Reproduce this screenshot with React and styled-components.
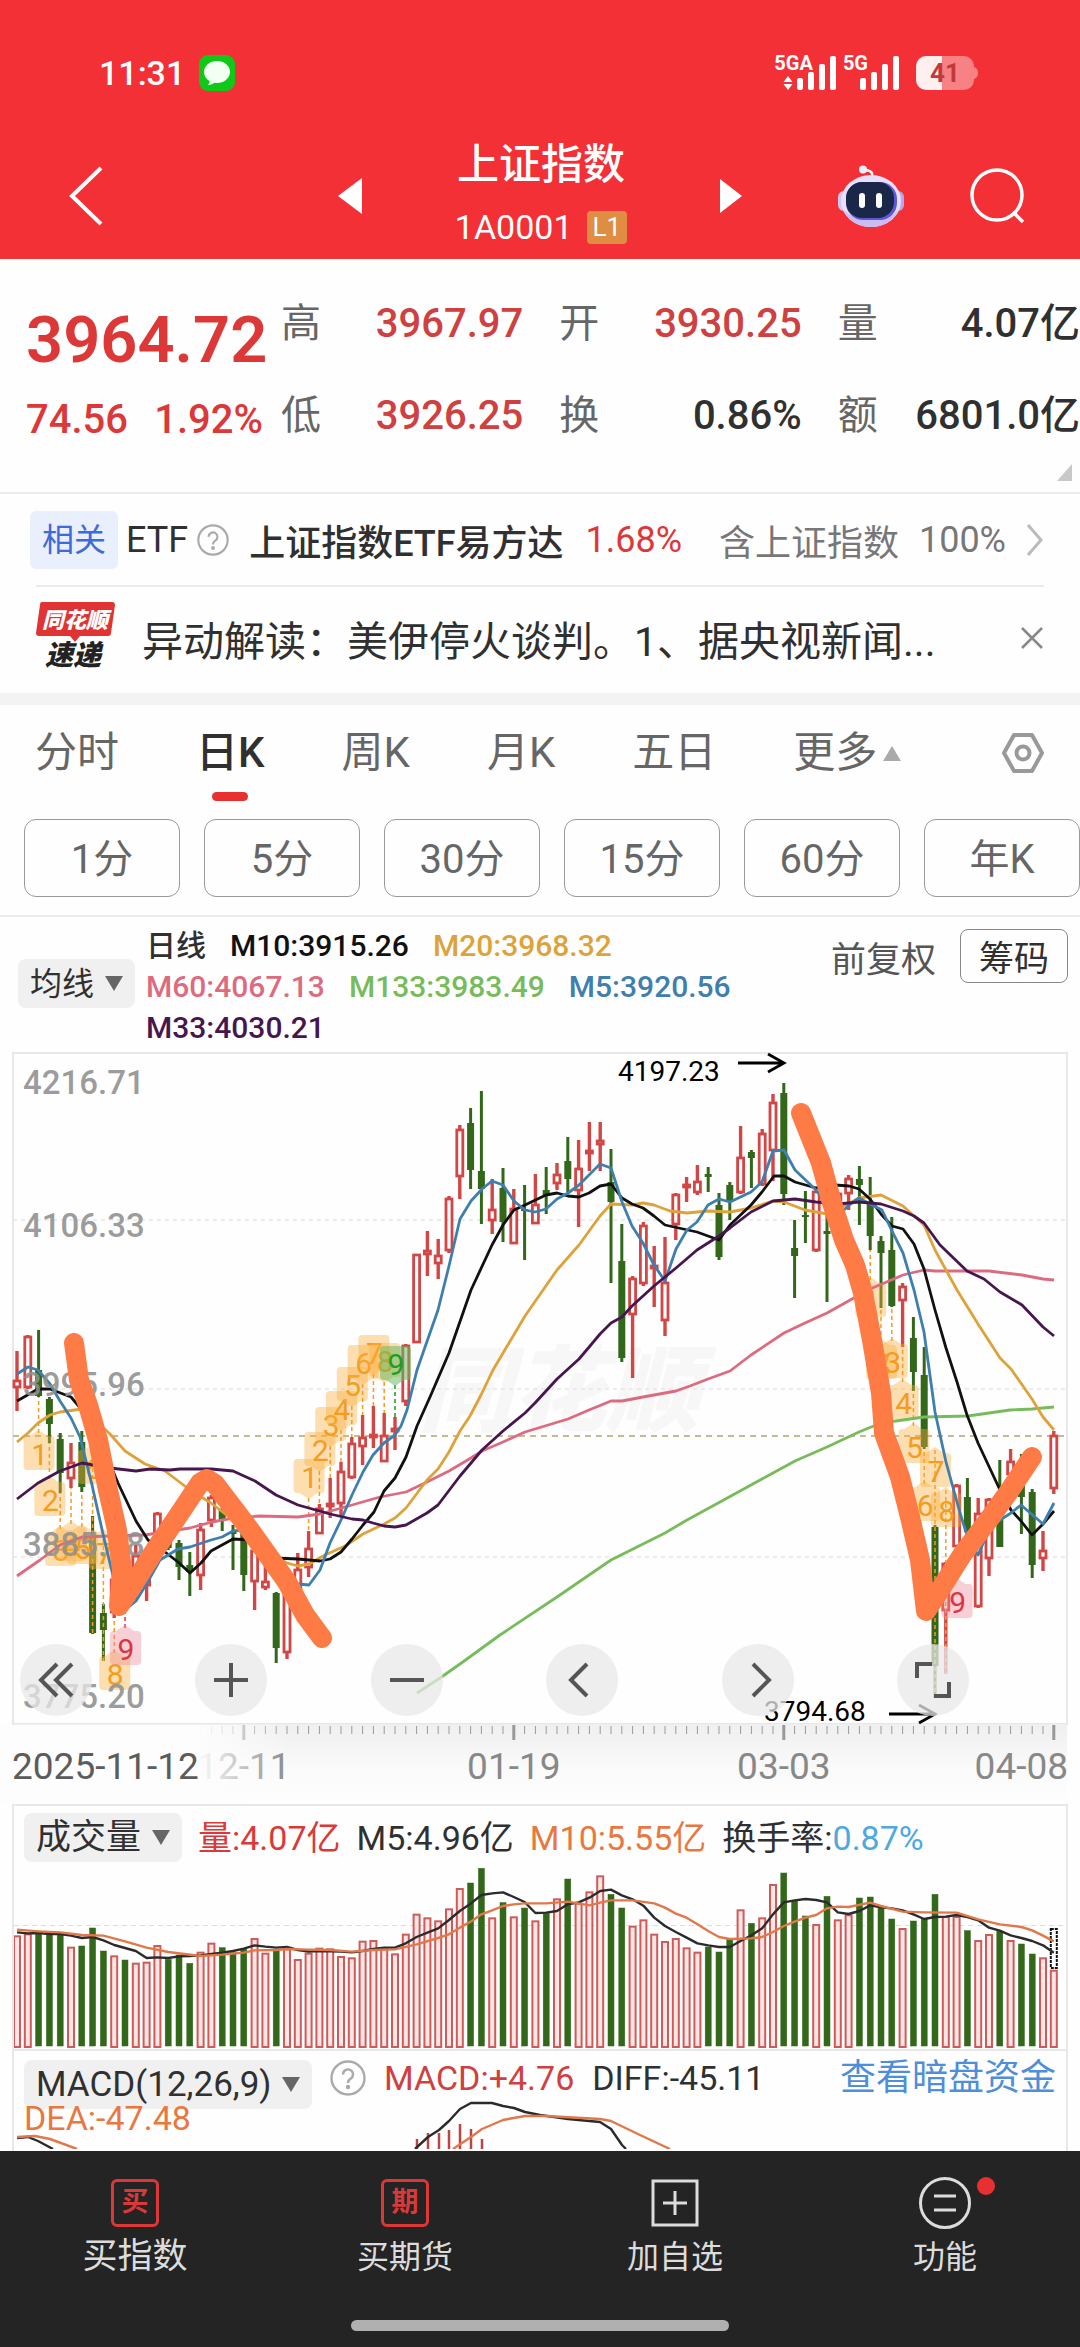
import React from "react";
import styled, { createGlobalStyle } from "styled-components";

const GlobalStyle = createGlobalStyle`
  * {
    box-sizing: border-box;
  }
  body {
    margin: 0;
    background: #fefefe;
    color: #303030;
    font-family: Roboto, "Noto Sans CJK SC", sans-serif;
  }
  button, select {
    font-family: inherit;
    color: inherit;
    background: none;
    border: 0;
    padding: 0;
    margin: 0;
  }
  svg {
    display: block;
    flex: none;
  }
`;

const RED = "#dc3838";
const GREEN = "#33681b";
const CANDLE_RED = "#d24646";

const Page = styled.div`
  min-height: 100vh;
  display: flex;
  flex-direction: column;
`;

/* ---------- header ---------- */

const Header = styled.header`
  background: #f23036;
  color: #fff;
`;

const StatusBar = styled.div`
  height: 134px;
  padding: 12px 102px 0 99px;
  display: flex;
  align-items: center;
  gap: 16px;
`;

const Clock = styled.span`
  flex: 1;
  display: flex;
  align-items: center;
  gap: 14px;
  font-size: 34px;
  font-weight: 500;
`;

const TitleBar = styled.div`
  height: 125px;
  padding: 0 54px 4px;
  display: grid;
  grid-template-columns: 1fr 404px 1fr;
  align-items: center;
`;

const BackButton = styled.button`
  padding-left: 14px;
`;

const TitleGroup = styled.div`
  display: flex;
  align-items: center;
  justify-content: space-between;
`;

const Title = styled.h1`
  margin: 0;
  font-size: 42px;
  font-weight: 500;
  line-height: 62px;
  text-align: center;
`;

const Code = styled.div`
  display: flex;
  align-items: center;
  justify-content: center;
  gap: 14px;
  font-size: 34px;
  line-height: 62px;
`;

const Level = styled.span`
  padding: 0 6px;
  border-radius: 4px;
  background: #e08d44;
  font-size: 26px;
  line-height: 33px;
`;

const Actions = styled.div`
  display: flex;
  align-items: center;
  justify-content: flex-end;
  gap: 66px;
`;

/* ---------- quote ---------- */

const Quote = styled.section`
  border-bottom: 2px solid #ececec;
`;

const QuoteRow = styled.div`
  display: flex;
  padding-top: 19px;
`;

const Last = styled.div`
  width: 281px;
  padding: 20px 18px 0 26px;
  color: ${RED};
  font-weight: 500;
`;

const Price = styled.div`
  font-size: 65px;
  font-weight: 600;
  line-height: 84px;
`;

const Change = styled.div`
  display: flex;
  justify-content: space-between;
  font-size: 40px;
  line-height: 76px;
`;

const Stats = styled.div`
  flex: 1;
  display: grid;
  grid-template-columns: repeat(3, 1fr);
  column-gap: 36px;
`;

const Stat = styled.div`
  display: flex;
  justify-content: space-between;
  font-size: 40px;
  line-height: 92px;
  white-space: nowrap;
  color: #666;
`;

const Value = styled.span`
  font-weight: 500;
  color: ${(p) => (p.$up ? "#cf4040" : "#303030")};
`;

const Corner = styled.svg`
  margin: 2px 8px 11px auto;
`;

const Related = styled.a`
  height: 91px;
  margin: 0 36px 0 30px;
  display: flex;
  align-items: center;
  font-size: 36px;
  color: #303030;
  text-decoration: none;
  white-space: nowrap;
`;

const Tag = styled.span`
  padding: 0 12px;
  margin-right: 8px;
  border-radius: 6px;
  background: #e9effd;
  color: #3f6ad8;
  font-size: 32px;
  line-height: 58px;
`;

const Fund = styled.span`
  margin: 0 22px 0 20px;
  font-weight: 500;
`;

const Rate = styled.span`
  flex: 1;
  color: ${RED};
`;

const Muted = styled.span`
  margin-right: 20px;
  color: #777;
`;

const News = styled.div`
  height: 108px;
  margin: 0 36px;
  padding-bottom: 4px;
  border-top: 2px solid #ececec;
  display: flex;
  align-items: center;
  gap: 26px;
  font-size: 41px;
`;

const NewsText = styled.p`
  flex: 1;
  margin: 0;
  white-space: nowrap;
`;

const Band = styled.div`
  height: 12px;
  background: #f3f3f3;
`;

/* ---------- period tabs ---------- */

const Tabs = styled.nav`
  height: 106px;
  padding: 0 35px;
  display: flex;
  align-items: flex-start;
  gap: 77px;
`;

const Tab = styled.button`
  position: relative;
  display: flex;
  align-items: center;
  gap: 6px;
  font-size: 42px;
  line-height: 96px;
  font-weight: ${(p) => (p.$active ? 500 : 400)};
  color: ${(p) => (p.$active ? "#303030" : "#666")};

  &::after {
    content: "";
    display: ${(p) => (p.$active ? "block" : "none")};
    position: absolute;
    left: 50%;
    bottom: 0;
    width: 36px;
    height: 9px;
    margin-left: -18px;
    border-radius: 5px;
    background: #e93030;
  }
`;

const Gear = styled.button`
  margin-left: auto;
  align-self: flex-start;
  height: 96px;
`;

const Chips = styled.div`
  padding: 8px 0 18px 24px;
  display: grid;
  grid-template-columns: repeat(6, 1fr);
  gap: 24px;
  border-bottom: 2px solid #ececec;
`;

const Chip = styled.button`
  height: 78px;
  padding-bottom: 5px;
  border: 1px solid #999;
  border-radius: 12px;
  font-size: 40px;
  color: #666;
`;

/* ---------- moving averages ---------- */

const Averages = styled.div`
  height: 135px;
  padding: 8px 12px 0 18px;
  display: flex;
  align-items: flex-start;
`;

const SelectBox = styled.label`
  display: flex;
  align-items: center;
  gap: 10px;
  height: 49px;
  padding: 0 12px;
  border-radius: 8px;
  background: #f0f0f0;
  font-size: ${(p) => (p.$small ? 32 : 35)}px;

  select {
    appearance: none;
    font-size: inherit;
    line-height: 46px;
    outline: 0;
  }
`;

const AverageSelect = styled.div`
  padding: 34px 11px 0 0;
`;

const AverageList = styled.div`
  width: 610px;
  display: flex;
  flex-wrap: wrap;
  column-gap: 24px;
  font-size: 30px;
  font-weight: 500;
  line-height: 41px;
`;

const Average = styled.span`
  color: ${(p) => p.$color};
`;

const Adjust = styled.div`
  flex: 1;
  display: flex;
  align-items: center;
  justify-content: flex-end;
  gap: 24px;
  height: 62px;
  font-size: 35px;
  color: #555;
  white-space: nowrap;
`;

const Outlined = styled.button`
  height: 54px;
  padding: 0 18px 4px;
  border: 1px solid #888;
  border-radius: 8px;
  font-size: 35px;
  color: #303030;
`;

/* ---------- charts ---------- */

const ChartArea = styled.section`
  position: relative;

  > svg {
    width: 100%;
    height: auto;
  }
`;

const Tools = styled.div`
  position: absolute;
  left: 20px;
  right: 111px;
  bottom: 88px;
  display: flex;
  justify-content: space-between;
`;

const ToolButton = styled.button`
  width: 72px;
  height: 72px;
  border-radius: 50%;
  background: rgba(232, 232, 232, 0.75);
  display: flex;
  align-items: center;
  justify-content: center;
`;

const Panel = styled.section`
  margin: 0 12px;
  border: solid #e8e8e8;
  border-width: 2px 2px 0;

  > svg {
    width: 100%;
    height: auto;
  }
`;

const VolumeHead = styled.div`
  display: flex;
  align-items: center;
  gap: 16px;
  height: 61px;
  padding: 2px 10px 0;
  font-size: 34px;
  line-height: 46px;
  white-space: nowrap;
`;

const Colored = styled.span`
  color: ${(p) => p.$color};
`;

const MacdPanel = styled(Panel)`
  flex: 1;
  display: grid;
  grid-template-rows: 98px;

  > * {
    grid-area: 1 / 1;
  }
`;

const MacdHead = styled.div`
  display: grid;
  align-content: start;
  padding: 9px 10px 0;
  font-size: 34px;
  line-height: 34px;
  white-space: nowrap;
`;

const MacdRow = styled.div`
  display: flex;
  gap: 18px;
  height: 40px;
`;

const MacdValue = styled.span`
  line-height: 36px;
  color: ${(p) => p.$color};
`;

const MoneyLink = styled.a`
  margin-left: auto;
  font-size: 36px;
  line-height: 36px;
  color: #4f8ed8;
  text-decoration: none;
`;

/* ---------- bottom bar ---------- */

const Bottom = styled.footer`
  background: #242424;
  color: #dcdcdc;
`;

const BottomNav = styled.nav`
  height: 169px;
  padding-top: 26px;
  display: grid;
  grid-template-columns: repeat(4, 1fr);
  align-items: start;
`;

const BottomItem = styled.button`
  display: flex;
  flex-direction: column;
  align-items: center;
  gap: 3px;
  font-size: ${(p) => (p.$large ? 35 : 32)}px;
  line-height: 50px;
`;

const Seal = styled.span`
  width: 48px;
  height: 48px;
  margin: 2px 0;
  border: 3px solid ${RED};
  border-radius: 6px;
  color: ${RED};
  font-size: 27px;
  font-weight: 700;
  line-height: 40px;
  text-align: center;
`;

const Handle = styled.div`
  width: 35%;
  height: 11px;
  margin: 0 auto 16px;
  border-radius: 6px;
  background: #b0b0b0;
`;

/* ---------- data ---------- */

const STEP = 10.8;
const cx = (i) => 17 + i * STEP;

// type, high, low, body top, body bottom
const CANDLES = [
  ["r", 1351, 1411, 1381, 1387], ["r", 1335, 1389, 1337, 1387], ["g", 1330, 1397, 1370, 1396],
  ["g", 1397, 1443, 1399, 1424], ["g", 1433, 1493, 1439, 1473], ["r", 1443, 1488, 1463, 1478],
  ["g", 1431, 1492, 1442, 1487], ["g", 1516, 1634, 1537, 1633], ["g", 1604, 1661, 1613, 1630],
  ["r", 1578, 1618, 1580, 1612], ["r", 1560, 1612, 1570, 1600], ["r", 1545, 1600, 1556, 1590],
  ["r", 1550, 1601, 1552, 1585], ["r", 1512, 1560, 1514, 1558], ["g", 1521, 1550, 1522, 1548],
  ["g", 1540, 1580, 1543, 1567], ["g", 1552, 1596, 1565, 1572], ["r", 1523, 1590, 1530, 1575],
  ["r", 1495, 1527, 1498, 1520], ["g", 1508, 1531, 1509, 1519], ["g", 1525, 1570, 1532, 1534],
  ["g", 1530, 1591, 1532, 1575], ["r", 1548, 1610, 1551, 1581], ["r", 1560, 1590, 1582, 1587],
  ["g", 1592, 1663, 1593, 1648], ["r", 1590, 1659, 1592, 1652], ["r", 1553, 1592, 1570, 1590],
  ["r", 1531, 1577, 1549, 1567], ["r", 1504, 1534, 1509, 1533], ["r", 1478, 1518, 1504, 1506],
  ["r", 1462, 1516, 1472, 1503], ["r", 1437, 1479, 1444, 1477], ["r", 1415, 1465, 1438, 1446],
  ["r", 1406, 1448, 1435, 1437], ["r", 1413, 1462, 1436, 1461], ["r", 1417, 1450, 1429, 1431],
  ["r", 1344, 1406, 1346, 1401], ["r", 1254, 1343, 1255, 1342], ["r", 1231, 1276, 1251, 1254],
  ["r", 1239, 1279, 1256, 1263], ["r", 1196, 1253, 1199, 1250], ["r", 1125, 1199, 1130, 1176],
  ["g", 1108, 1189, 1123, 1170], ["g", 1091, 1224, 1171, 1189], ["r", 1179, 1234, 1210, 1220],
  ["g", 1168, 1242, 1188, 1222], ["r", 1189, 1244, 1209, 1243], ["g", 1185, 1260, 1209, 1211],
  ["r", 1174, 1224, 1205, 1223], ["g", 1167, 1214, 1190, 1195], ["r", 1163, 1190, 1175, 1183],
  ["g", 1137, 1192, 1161, 1179], ["r", 1140, 1227, 1169, 1190], ["r", 1122, 1171, 1151, 1153],
  ["r", 1122, 1171, 1141, 1144], ["g", 1149, 1283, 1182, 1202], ["g", 1224, 1362, 1261, 1358],
  ["r", 1276, 1378, 1279, 1314], ["r", 1222, 1286, 1226, 1283], ["r", 1246, 1307, 1266, 1268],
  ["r", 1237, 1336, 1283, 1320], ["r", 1193, 1240, 1195, 1224], ["r", 1177, 1202, 1185, 1187],
  ["r", 1165, 1195, 1182, 1192], ["g", 1167, 1192, 1174, 1177], ["g", 1193, 1260, 1205, 1257],
  ["g", 1182, 1220, 1185, 1202], ["r", 1126, 1194, 1158, 1192], ["g", 1150, 1188, 1152, 1158],
  ["r", 1129, 1186, 1134, 1184], ["r", 1094, 1181, 1103, 1150], ["g", 1083, 1205, 1093, 1194],
  ["g", 1220, 1298, 1248, 1256], ["g", 1191, 1243, 1215, 1217], ["r", 1190, 1252, 1192, 1250],
  ["g", 1213, 1302, 1231, 1234], ["r", 1192, 1235, 1194, 1225], ["r", 1175, 1210, 1179, 1193],
  ["g", 1166, 1225, 1179, 1185], ["g", 1177, 1250, 1202, 1236], ["g", 1236, 1308, 1241, 1253],
  ["g", 1217, 1307, 1250, 1306], ["r", 1283, 1347, 1287, 1300], ["g", 1317, 1391, 1338, 1372],
  ["g", 1347, 1449, 1375, 1447], ["g", 1525, 1698, 1527, 1666], ["r", 1562, 1674, 1564, 1610],
  ["r", 1484, 1547, 1486, 1546], ["g", 1478, 1563, 1497, 1532], ["r", 1498, 1608, 1514, 1606],
  ["r", 1498, 1576, 1500, 1558], ["g", 1460, 1547, 1512, 1547], ["r", 1449, 1478, 1462, 1474],
  ["g", 1454, 1534, 1475, 1497], ["g", 1489, 1578, 1492, 1565], ["r", 1531, 1571, 1551, 1558],
  ["r", 1431, 1494, 1436, 1488],
];

const LINES = [
  ["#dd6b80", "17,1576 40,1560 60,1545 82,1537 110,1536 145,1535 170,1531 190,1528 212,1522 233,1518 260,1516 298,1517 320,1514 352,1505 380,1497 406,1492 427,1482 449,1471 471,1458 482,1451 503,1442 525,1432 568,1419 589,1410 611,1401 622,1401 643,1397 676,1391 690,1386 708,1379 730,1371 751,1355 784,1333 805,1323 827,1313 870,1289 903,1275 924,1270 935,1271 989,1271 1022,1275 1043,1279 1054,1280"],
  ["#77bb5b", "417,1693 440,1678 460,1664 500,1635 557,1597 611,1560 643,1544 665,1533 687,1520 720,1502 773,1473 795,1461 827,1447 859,1432 881,1423 903,1420 924,1417 968,1416 1010,1410 1032,1409 1054,1407"],
  ["#dda33a", "17,1442 28,1433 38,1423 50,1415 60,1412 82,1409 95,1420 110,1434 125,1451 145,1464 165,1471 190,1490 211,1503 233,1520 255,1540 276,1557 287,1563 298,1566 309,1564 325,1555 345,1546 363,1534 384,1524 395,1518 406,1508 427,1480 438,1469 449,1452 460,1431 470,1416 481,1395 493,1370 525,1316 557,1270 579,1245 600,1216 611,1204 632,1205 643,1203 654,1205 670,1211 687,1213 708,1211 730,1212 751,1208 773,1201 784,1202 805,1210 827,1214 848,1204 859,1198 881,1195 903,1206 924,1225 935,1250 957,1290 978,1324 1000,1358 1011,1369 1032,1399 1043,1417 1054,1430"],
  ["#111", "17,1401 38,1389 50,1389 71,1397 82,1410 100,1440 118,1483 136,1521 148,1540 165,1552 178,1562 190,1573 201,1563 211,1551 233,1539 250,1540 275,1558 298,1559 320,1561 330,1559 341,1552 352,1539 363,1525 374,1512 384,1491 395,1478 406,1457 417,1426 430,1397 449,1353 471,1290 492,1245 503,1225 514,1210 525,1205 546,1195 557,1193 568,1196 579,1197 589,1193 600,1186 611,1184 622,1198 632,1204 643,1208 654,1216 665,1225 697,1232 719,1240 730,1225 751,1205 762,1192 774,1176 784,1176 795,1182 816,1188 835,1185 849,1186 859,1189 870,1199 881,1214 892,1226 903,1229 914,1244 924,1269 935,1310 946,1348 957,1382 967,1415 978,1443 1000,1490 1011,1510 1021,1521 1032,1535 1043,1524 1054,1511"],
  ["#3f7fae", "17,1374 28,1367 38,1370 50,1384 60,1401 71,1418 80,1437 92,1485 103,1534 114,1580 125,1610 136,1601 147,1583 160,1560 178,1549 190,1547 211,1540 222,1537 233,1531 244,1530 255,1540 276,1565 298,1584 309,1585 320,1570 330,1543 341,1520 352,1495 363,1472 373,1455 384,1443 395,1435 401,1426 407,1410 417,1370 438,1310 449,1266 460,1219 471,1201 482,1189 492,1181 503,1185 514,1201 525,1210 535,1212 546,1209 557,1199 568,1193 579,1185 589,1175 600,1164 611,1168 622,1202 632,1226 643,1243 654,1265 665,1281 676,1249 687,1230 697,1222 708,1205 719,1199 730,1202 751,1192 762,1182 773,1151 784,1150 795,1170 816,1190 827,1205 838,1216 849,1205 859,1198 870,1204 882,1210 892,1231 903,1253 914,1290 924,1332 935,1412 946,1462 960,1513 967,1535 978,1555 989,1530 1000,1520 1011,1513 1021,1505 1043,1524 1054,1503"],
  ["#47164f", "17,1499 38,1483 60,1471 82,1463 110,1468 136,1471 150,1469 170,1470 180,1469 211,1469 233,1471 255,1481 276,1495 298,1505 330,1514 352,1519 363,1520 373,1523 384,1526 395,1527 406,1525 427,1513 438,1505 460,1476 482,1450 503,1431 525,1413 535,1403 557,1379 579,1359 590,1346 600,1334 611,1323 622,1317 632,1306 654,1286 676,1268 697,1250 719,1236 730,1228 751,1212 773,1201 795,1199 816,1202 838,1204 859,1202 881,1204 903,1211 914,1216 924,1223 940,1245 967,1271 984,1279 1000,1292 1022,1305 1043,1327 1054,1336"],
];

// candle index, center y, digit
const MARKS = [
  [2, 1453, 1], [3, 1499, 2], [4, 1549, 3], [5, 1544, 4], [6, 1547, 5], [7, 1467, 6], [8, 1552, 7], [9, 1673, 8],
  [10, 1648, 9, "hot"],
  [27, 1476, 1, "up"], [28, 1449, 2, "up"], [29, 1424, 3, "up"], [30, 1408, 4, "up"], [31, 1384, 5, "up"],
  [32, 1362, 6, "up"], [33, 1352, 7, "up"], [34, 1360, 8, "up"], [35, 1363, 9, "cool"],
  [79, 1300, 1], [80, 1362, 2], [81, 1361, 3], [82, 1402, 4], [83, 1446, 5], [84, 1504, 6], [85, 1470, 7],
  [86, 1510, 8], [87, 1601, 9, "hot"],
];

const MARK_COLORS = {
  hot: ["#f08a98", "#dd3344"],
  cool: ["#6dbb62", "#1d9d22"],
};

const AXIS = [["4216.71", 1094], ["4106.33", 1237], ["3995.96", 1396], ["3885.58", 1556], ["3775.20", 1708]];

const VOLUME_TYPES =
  "rrgggrggg" + "rgrrrgggrrgggrrgrrrrrrrrrrrrrrrrrggrgrgrgrgrrrggrrrrrrrgggrgrrgggrgrrggggrgggrrgrrgrggrr";

const VOLUME_TOPS = [
  403, 397, 390, 395, 397, 437, 435, 381, 450, 463, 477, 485, 482, 432, 475, 462, 487, 452, 425, 440, 455, 445, 411,
  455, 450, 442, 474, 455, 440, 442, 465, 469, 419, 417, 440, 457, 398, 338, 349, 358, 322, 261, 246, 202, 349, 305,
  346, 321, 358, 337, 292, 234, 305, 271, 223, 280, 321, 374, 355, 398, 420, 411, 439, 452, 438, 453, 415, 325, 367,
  349, 249, 216, 300, 345, 369, 286, 355, 340, 291, 288, 320, 354, 381, 360, 355, 280, 345, 345, 389, 417, 399, 391,
  417, 429, 459, 469, 506,
];

const VOLUME_M5 = [
  394, 397, 396, 399, 399, 404, 411, 408, 418, 432, 441, 450, 471, 469, 471, 466, 465, 463, 459, 455, 450, 443, 433,
  437, 440, 438, 447, 452, 450, 451, 452, 454, 450, 444, 440, 440, 427, 408, 395, 382, 357, 330, 308, 282, 277, 274,
  288, 303, 336, 335, 330, 310, 304, 290, 270, 266, 283, 295, 314, 350, 375, 393, 410, 427, 433, 438, 438, 420, 403,
  382, 340, 304, 298, 294, 297, 304, 334, 339, 330, 313, 319, 322, 328, 340, 354, 348, 347, 342, 348, 358, 380, 389,
  403, 411, 420, 433, 455,
];

const VOLUME_M10 = [
  [0, 386], [2, 391], [4, 394], [6, 402], [8, 404], [10, 421], [12, 440], [14, 453], [17, 465], [19, 461], [21, 455],
  [22, 448], [24, 447], [25, 444], [27, 446], [29, 447], [31, 452], [33, 447], [35, 445], [37, 430], [39, 411],
  [40, 400], [41, 380], [42, 362], [43, 340], [44, 328], [45, 315], [46, 310], [47, 307], [49, 307], [51, 302],
  [53, 313], [54, 305], [55, 298], [57, 298], [59, 307], [60, 320], [61, 338], [62, 350], [63, 370], [64, 390],
  [65, 408], [66, 414], [68, 412], [69, 408], [70, 393], [71, 375], [72, 362], [73, 350], [74, 342], [75, 322],
  [76, 317], [77, 318], [79, 305], [80, 315], [82, 332], [84, 334], [87, 335], [89, 355], [91, 370], [93, 378],
  [94, 388], [95, 404], [96, 421],
];

/* ---------- drawings ---------- */

function Arrow({ color = "#666", up }) {
  return (
    <svg width="18" height="15" viewBox="0 0 18 15">
      <path d={up ? "M9 0L18 15H0z" : "M0 0h18L9 15z"} fill={color} />
    </svg>
  );
}

function Help({ size }) {
  return (
    <svg width={size} height={size} viewBox="0 0 36 36" fill="none" stroke="#aaa" strokeWidth="2.4">
      <circle cx="18" cy="18" r="16.5" />
      <path d="M13 14.5a5 5 0 1 1 7.6 4.2c-1.8 1.1-2.6 2-2.6 4.3" />
      <circle cx="18" cy="27" r="1" fill="#aaa" />
    </svg>
  );
}

function Signal({ arrows }) {
  return (
    <svg width="54" height="34" viewBox="0 0 54 34" fill="#fff">
      {arrows && <path d="M5 20l4.5 6h-9zM5 34l4.5-6h-9z" />}
      <rect x="14" y="22" width="6" height="12" rx="2" />
      <rect x="25" y="16" width="6" height="18" rx="2" />
      <rect x="36" y="8" width="6" height="26" rx="2" />
      <rect x="47" y="0" width="6" height="34" rx="2" />
    </svg>
  );
}

const Network = styled.span`
  display: flex;
  align-items: flex-start;
  font-size: 20px;
  font-weight: 700;
  line-height: 14px;

  svg {
    margin-left: -30px;
  }
  & + & {
    margin-left: -10px;
  }
  & + & svg {
    margin-left: -22px;
  }
`;

function Battery() {
  return (
    <svg width="62" height="34" viewBox="0 0 62 34">
      <path d="M26 0h22a10 10 0 0 1 10 10v1q4 1 4 6t-4 6v1a10 10 0 0 1-10 10H26z" fill="#f88184" />
      <path d="M10 0h16v34H10A10 10 0 0 1 0 24V10A10 10 0 0 1 10 0z" fill="#fff0ef" />
      <text x="29" y="26" fontSize="26" fontWeight="700" fill="#c2383b" textAnchor="middle">41</text>
    </svg>
  );
}

function Robot() {
  return (
    <svg width="66" height="62" viewBox="0 0 66 62">
      <path d="M33 13c3-5 0-8-7-8" fill="none" stroke="#fff" strokeWidth="2.5" />
      <circle cx="25" cy="4.5" r="4" fill="#f3eefc" />
      <rect x="0" y="26" width="12" height="20" rx="6" fill="#cfc6f2" />
      <rect x="54" y="26" width="12" height="20" rx="6" fill="#b5a9ea" />
      <ellipse cx="33" cy="36" rx="30" ry="26" fill="#e7e0fb" />
      <path d="M5 44c6 12 15 18 28 18s22-6 28-18c-6 7-14 11-28 11S11 51 5 44z" fill="#c9bdf3" />
      <rect x="8" y="17" width="51" height="38" rx="17" fill="#6256d8" />
      <rect x="8" y="17" width="48" height="36" rx="16" fill="#1b2748" />
      <rect x="21" y="28" width="6" height="15" rx="3" fill="#fff" />
      <rect x="38" y="28" width="6" height="15" rx="3" fill="#fff" />
    </svg>
  );
}

function ExpressLogo() {
  return (
    <svg width="80" height="76" viewBox="0 -2 80 76">
      <path d="M6 0h70q3 0 3 3l-4 28q0 3-3 3H44l-5 6-5-6H3q-3 0-3-3L4 3q0-3 2-3z" fill="#e03434" />
      <text x="39" y="26" fontSize="22" fontWeight="900" fontStyle="italic" fill="#fff" textAnchor="middle">同花顺</text>
      <text x="37" y="63" fontSize="28" fontWeight="900" fontStyle="italic" fill="#222" textAnchor="middle">速递</text>
    </svg>
  );
}

function Mark({ index, y, digit, kind }) {
  const [fill, ink] = MARK_COLORS[kind] || ["#fbb040", "#f39c1f"];
  const x = cx(index);
  const rises = kind === "up" || kind === "cool";
  const end = rises ? CANDLES[index][1] : CANDLES[index][2];
  return (
    <g>
      <line x1={x} x2={x} y1={rises ? y + 22 : y - 20} y2={end} stroke={ink} strokeWidth="1.500" strokeDasharray="4 3" />
      <g fill={fill} opacity={kind === "cool" ? 0.55 : 0.4}>
        <rect x={x - 15} y={y - 17} width="31" height="34" rx="4" />
        <path d={rises ? `M${x - 9} ${y + 17}h18l-9 6z` : `M${x - 9} ${y - 17}h18l-9-6z`} />
      </g>
      <text x={x + 1} y={y + 12} fontSize="30" fill={ink} textAnchor="middle">{digit}</text>
    </g>
  );
}

function Candle({ index, data }) {
  const [type, high, low, top, bottom] = data;
  const x = cx(index);
  if (type === "g") {
    return (
      <g fill={GREEN}>
        <rect x={x - 1.5} y={high} width="3" height={low - high} />
        <rect x={x - 3.5} y={top} width="7" height={bottom - top} />
      </g>
    );
  }
  return (
    <g fill="none" stroke={CANDLE_RED}>
      <path d={`M${x} ${high}V${top}M${x} ${bottom}V${low}`} strokeWidth="3.4" />
      <rect x={x - 3} y={top} width="6" height={bottom - top} strokeWidth="2.8" />
    </g>
  );
}

function PriceChart() {
  return (
    <svg viewBox="0 1052 1080 752">
      <defs>
        <linearGradient id="scale" x1="0" y1="0" x2="0" y2="1">
          <stop offset="0" stopColor="#efefef" />
          <stop offset="0.5" stopColor="#f9f9f9" />
          <stop offset="1" stopColor="#fefefe" />
        </linearGradient>
        <linearGradient id="fade">
          <stop offset="0" stopColor="#fdfdfd" />
          <stop offset="0.68" stopColor="#fdfdfd" />
          <stop offset="1" stopColor="#fdfdfd" stopOpacity="0" />
        </linearGradient>
      </defs>
      <rect x="13" y="1053" width="1054" height="671" fill="none" stroke="#e8e8e8" strokeWidth="2" />
      <text x="418" y="1424" fontSize="94" fontWeight="900" fontStyle="italic" fill="#f7f7f7">同花顺</text>
      {[1220, 1389, 1557].map((y) => (
        <line key={y} x1="13" x2="1067" y1={y} y2={y} stroke="#e6e6e6" strokeWidth="1.500" strokeDasharray="4 4" />
      ))}
      <line x1="13" x2="1067" y1="1436" y2="1436" stroke="#b3a56c" strokeWidth="1.500" strokeDasharray="6 5" />
      {CANDLES.map((data, i) => <Candle key={i} index={i} data={data} />)}
      {MARKS.map(([index, y, digit, kind]) => (
        <Mark key={index} index={index} y={y} digit={digit} kind={kind} />
      ))}
      {LINES.map(([color, points]) => (
        <polyline key={color} points={points} fill="none" stroke={color} strokeWidth="2.800" strokeLinejoin="round" />
      ))}
      <g fontSize="33" fontWeight="500" fill="#8f8f8f" fillOpacity="0.9">
        {AXIS.map(([label, y]) => <text key={label} x="23" y={y}>{label}</text>)}
      </g>
      <g fontSize="28" fill="#000">
        <text x="618" y="1081">4197.23</text>
        <text x="764" y="1721">3794.68</text>
      </g>
      <path
        d="M738 1063h45M768 1054l16 9-16 9M889 1714h45M919 1705l16 9-16 9"
        fill="none"
        stroke="#000"
        strokeWidth="2.800"
      />
      <g fill="none" stroke="#fe7b46" strokeWidth="20" strokeLinecap="round" strokeLinejoin="round">
        <path d="M74 1343L79 1380L88 1405L98 1440L108 1490L117 1530L122 1570L119 1606L131 1588L155 1550L182 1510L200 1483L207 1479L215 1484L250 1530L287 1582L305 1615L322 1638" />
        <path d="M801 1113L821 1163L832 1203L844 1240L855 1265L863 1293L872 1340L881 1393L884 1433L900 1477L910 1517L920 1560L926 1611L940 1590L962 1555L987 1522L1010 1490L1032 1457" />
      </g>
      <rect x="13" y="1724" width="1054" height="79" fill="url(#scale)" />
      <g stroke="#999">
        {CANDLES.map((_, i) => (
          <line key={i} x1={cx(i)} x2={cx(i)} y1="1726" y2="1734" strokeWidth="1" />
        ))}
        {[21, 46, 71, 96].map((i) => (
          <line key={i} x1={cx(i)} x2={cx(i)} y1="1725" y2="1740" strokeWidth="3" />
        ))}
      </g>
      <g fontSize="37" fill="#888">
        <text x={cx(21)} y="1779" textAnchor="middle">12-11</text>
        <text x={cx(46)} y="1779" textAnchor="middle">01-19</text>
        <text x={cx(71)} y="1779" textAnchor="middle">03-03</text>
        <text x="1068" y="1779" textAnchor="end">04-08</text>
        <rect x="0" y="1725" width="290" height="78" fill="url(#fade)" />
        <text x="12" y="1779" fill="#5c5c5c">2025-11-12</text>
      </g>
    </svg>
  );
}

function VolumeChart() {
  const y = (v) => v / 3;
  return (
    <svg viewBox="14 66 1052 182">
      <line x1="14" x2="1066" y1="124.500" y2="124.500" stroke="#e0dada" strokeDasharray="5 4" />
      {VOLUME_TOPS.map((top, i) => {
        const up = VOLUME_TYPES[i] === "r";
        return (
          <rect
            key={i}
            x={cx(i) - 3}
            y={y(top) + (up ? 1 : 0)}
            width="6"
            height={245 - y(top)}
            fill={up ? "#fde6e4" : GREEN}
            stroke={up ? "#cf5a5a" : GREEN}
            strokeWidth={up ? 2 : 0.5}
          />
        );
      })}
      <rect x={cx(96) - 3} y="128" width="6" height="39" fill="#fff" stroke="#111" strokeWidth="2" strokeDasharray="3 1" />
      <g fill="none" strokeWidth="2.400" strokeLinejoin="round">
        <polyline points={VOLUME_M5.map((v, i) => `${cx(i)},${y(v)}`).join(" ")} stroke="#2b2b2b" />
        <polyline points={VOLUME_M10.map(([i, v]) => `${cx(i)},${y(v)}`).join(" ")} stroke="#e0784a" />
      </g>
    </svg>
  );
}

function MacdChart() {
  return (
    <svg viewBox="14 2053 1052 98">
      <path
        d="M417 2141v10M428 2135v16M439 2135v16M449 2132v19M460 2126v25M471 2131v20M482 2141v10"
        stroke="#b94545"
        strokeWidth="2.500"
      />
      <g fill="none" strokeWidth="2.400" strokeLinejoin="round">
        <path d="M17 2140L28 2139L38 2143L53 2151M415 2151L428 2139L439 2132L449 2123L460 2111L471 2105L492 2105L503 2108L514 2110L525 2114L540 2117L568 2121L600 2124L611 2131L622 2147L626 2151" stroke="#2b2b2b" />
        <path d="M17 2139L35 2138L50 2141L77 2151M453 2151L471 2139L482 2131L503 2122L525 2118L546 2118L600 2121L611 2123L640 2137L670 2151" stroke="#e0784a" />
      </g>
    </svg>
  );
}

const TOOL_ICONS = [
  ["收起", "M22 5L6 21l16 16M37 5L21 21l16 16"],
  ["放大", "M4 21h34M21 4v34"],
  ["缩小", "M4 21h34"],
  ["向左", "M26 5L10 21l16 16"],
  ["向右", "M16 5l16 16-16 16"],
  ["全屏", "M5 19V5h15M37 23v14H22"],
];

function Picker({ label, small }) {
  return (
    <SelectBox $small={small}>
      <select aria-label={label}>
        <option>{label}</option>
      </select>
      <Arrow />
    </SelectBox>
  );
}

/* ---------- page ---------- */

const STATS = [
  ["高", "3967.97", true], ["开", "3930.25", true], ["量", "4.07亿"],
  ["低", "3926.25", true], ["换", "0.86%"], ["额", "6801.0亿"],
];

const AVERAGES = [
  ["日线", "#303030"], ["M10:3915.26", "#111"], ["M20:3968.32", "#dda33a"],
  ["M60:4067.13", "#dd6b80"], ["M133:3983.49", "#77bb5b"], ["M5:3920.56", "#3f7fae"],
  ["M33:4030.21", "#47164f"],
];

export default function App() {
  return (
    <Page>
      <GlobalStyle />
      <Header>
        <StatusBar>
          <Clock>
            11:31
            <svg width="36" height="36" viewBox="0 0 36 36">
              <rect width="36" height="36" rx="9" fill="#10c818" />
              <ellipse cx="18" cy="17" rx="13" ry="11" fill="#f4fff4" />
              <path d="M11 24q0 4-2 6 5 0 8-4z" fill="#f4fff4" />
            </svg>
          </Clock>
          <Network>5GA<Signal arrows /></Network>
          <Network>5G<Signal /></Network>
          <Battery />
        </StatusBar>
        <TitleBar>
          <BackButton aria-label="返回">
            <svg width="36" height="60" viewBox="0 0 36 60" fill="none" stroke="#fff" strokeWidth="4">
              <path d="M33 2L4 30l29 28" />
            </svg>
          </BackButton>
          <TitleGroup>
            <button aria-label="上一个">
              <svg width="24" height="36" viewBox="0 0 24 36"><path d="M24 0v36L0 18z" fill="#fff" /></svg>
            </button>
            <div>
              <Title>上证指数</Title>
              <Code>1A0001<Level>L1</Level></Code>
            </div>
            <button aria-label="下一个">
              <svg width="22" height="34" viewBox="0 0 22 34"><path d="M0 0v34l22-17z" fill="#fff" /></svg>
            </button>
          </TitleGroup>
          <Actions>
            <button aria-label="助手"><Robot /></button>
            <button aria-label="搜索">
              <svg width="56" height="56" viewBox="0 0 56 56" fill="none" stroke="#fff" strokeWidth="3.500">
                <circle cx="27" cy="27" r="25" />
                <path d="M43 44l10 10" />
              </svg>
            </button>
          </Actions>
        </TitleBar>
      </Header>

      <Quote>
        <QuoteRow>
          <Last>
            <Price>3964.72</Price>
            <Change><span>74.56</span><span>1.92%</span></Change>
          </Last>
          <Stats>
            {STATS.map(([label, value, up]) => (
              <Stat key={label}>{label}<Value $up={up}>{value}</Value></Stat>
            ))}
          </Stats>
        </QuoteRow>
        <Corner width="15" height="17" viewBox="0 0 15 17"><path d="M15 0v17H0z" fill="#c8c8c8" /></Corner>
      </Quote>

      <Related href="#">
        <Tag>相关</Tag>
        ETF&nbsp;<Help size={32} />
        <Fund>上证指数ETF易方达</Fund>
        <Rate>1.68%</Rate>
        <Muted>含上证指数</Muted>
        <Muted>100%</Muted>
        <svg width="18" height="34" viewBox="0 0 18 34" fill="none" stroke="#bbb" strokeWidth="3"><path d="M2 2l13 15L2 32" /></svg>
      </Related>
      <News>
        <ExpressLogo />
        <NewsText>异动解读：美伊停火谈判。1、据央视新闻...</NewsText>
        <button aria-label="关闭">
          <svg width="24" height="24" viewBox="0 0 24 24" stroke="#888" strokeWidth="2.500"><path d="M2 2l20 20M22 2L2 22" /></svg>
        </button>
      </News>
      <Band />

      <Tabs>
        <Tab>分时</Tab>
        <Tab $active>日K</Tab>
        <Tab>周K</Tab>
        <Tab>月K</Tab>
        <Tab>五日</Tab>
        <Tab>更多<Arrow up color="#aaa" /></Tab>
        <Gear aria-label="设置">
          <svg width="44" height="42" viewBox="0 0 44 42" fill="none" stroke="#999" strokeWidth="4" strokeLinejoin="round">
            <path d="M13 3h18l10 18-10 18H13L3 21z" />
            <circle cx="22" cy="21" r="6.500" />
          </svg>
        </Gear>
      </Tabs>
      <Chips>
        {["1分", "5分", "30分", "15分", "60分", "年K"].map((name) => <Chip key={name}>{name}</Chip>)}
      </Chips>

      <Averages>
        <AverageSelect><Picker label="均线" small /></AverageSelect>
        <AverageList>
          {AVERAGES.map(([text, color]) => <Average key={text} $color={color}>{text}</Average>)}
        </AverageList>
        <Adjust>前复权<Outlined>筹码</Outlined></Adjust>
      </Averages>

      <ChartArea>
        <PriceChart />
        <Tools>
          {TOOL_ICONS.map(([label, d]) => (
            <ToolButton key={label} aria-label={label}>
              <svg width="42" height="42" viewBox="0 0 42 42" fill="none" stroke="#555" strokeWidth="4"><path d={d} /></svg>
            </ToolButton>
          ))}
        </Tools>
      </ChartArea>

      <Panel>
        <VolumeHead>
          <Picker label="成交量" />
          <Colored $color={RED}>量:4.07亿</Colored>
          <Colored $color="#303030">M5:4.96亿</Colored>
          <Colored $color="#e8783f">M10:5.55亿</Colored>
          <span>换手率:<Colored $color="#4fa9de">0.87%</Colored></span>
        </VolumeHead>
        <VolumeChart />
      </Panel>

      <MacdPanel>
        <MacdChart />
        <MacdHead>
          <MacdRow>
            <Picker label="MACD(12,26,9)" />
            <Help size={36} />
            <MacdValue $color="#cf4040">MACD:+4.76</MacdValue>
            <MacdValue $color="#303030">DIFF:-45.11</MacdValue>
            <MoneyLink href="#">查看暗盘资金</MoneyLink>
          </MacdRow>
          <MacdValue $color="#e8783f">DEA:-47.48</MacdValue>
        </MacdHead>
      </MacdPanel>

      <Bottom>
        <BottomNav>
          <BottomItem $large><Seal>买</Seal>买指数</BottomItem>
          <BottomItem><Seal>期</Seal>买期货</BottomItem>
          <BottomItem>
            <svg width="52" height="52" viewBox="0 0 52 52" fill="none" stroke="#dcdcdc" strokeWidth="3">
              <path d="M4 4h44v44H4zM14 26h24M26 14v24" />
            </svg>
            加自选
          </BottomItem>
          <BottomItem>
            <svg width="100" height="52" viewBox="0 0 100 52" fill="none" stroke="#dcdcdc" strokeWidth="3">
              <circle cx="50" cy="26" r="24.500" />
              <path d="M39 19h22M39 33h22" />
              <circle cx="91" cy="9" r="9" fill="#e93030" stroke="none" />
            </svg>
            功能
          </BottomItem>
        </BottomNav>
        <Handle />
      </Bottom>
    </Page>
  );
}
